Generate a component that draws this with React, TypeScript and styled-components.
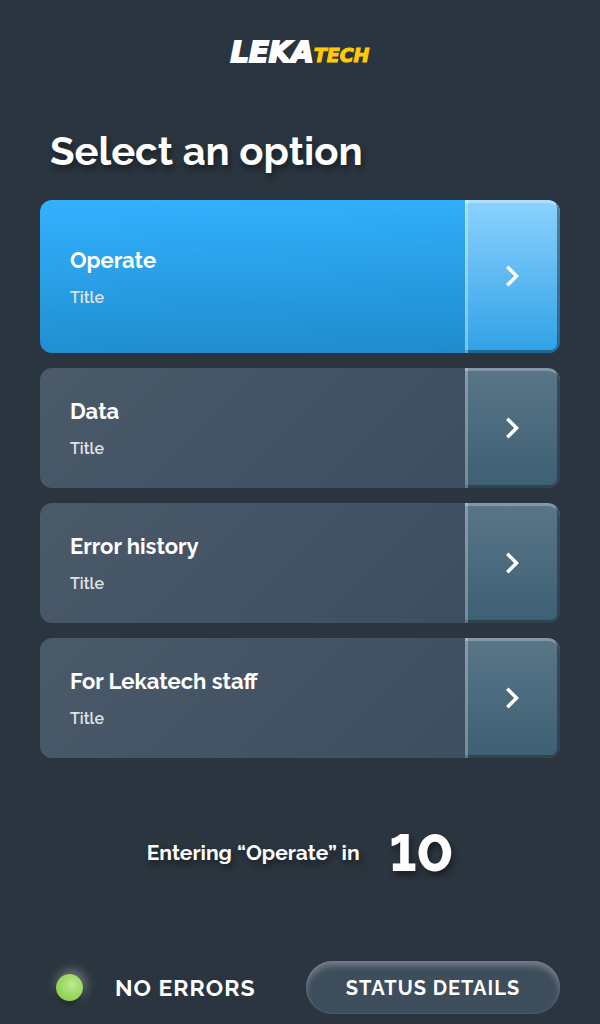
import React from 'react';
import styled, { createGlobalStyle, css } from 'styled-components';

const GlobalStyle = createGlobalStyle`
  *, *::before, *::after { box-sizing: border-box; }
  body {
    margin: 0;
    background: #2b353f;
    color: #fff;
    font-family: Raleway, Lato, sans-serif;
    font-weight: 700;
  }
  button { font: inherit; color: inherit; border: 0; cursor: pointer; }
`;

const Page = styled.main`
  display: flex;
  flex-direction: column;
  min-height: 100vh;
  padding: 36px 40px 10px;
`;

const Logo = styled.div`
  display: flex;
  justify-content: center;
  align-items: baseline;
  height: 34px;
  font-family: 'DejaVu Sans', sans-serif;
  font-style: italic;
  font-weight: 700;
  font-size: 29px;
  line-height: 32px;
  -webkit-text-stroke: 2px currentColor;
`;

const LogoAccent = styled.span`
  color: #ffcb05;
  font-size: 19px;
  line-height: 20px;
  -webkit-text-stroke: 1px currentColor;
`;

const Heading = styled.h1`
  margin: 57px 10px 25px;
  font-size: 40px;
  line-height: 48px;
  text-shadow: 2px 4px 6px rgba(0, 0, 0, 0.45);
`;

const Options = styled.nav`
  display: flex;
  flex-direction: column;
  gap: 15px;
`;

const Option = styled.button<{ $primary?: boolean }>`
  display: flex;
  width: 100%;
  padding: 0;
  overflow: hidden;
  border-radius: 12px;
  text-align: left;
  min-height: ${(p) => (p.$primary ? 153 : 120)}px;
  background: ${(p) =>
    p.$primary
      ? 'linear-gradient(178deg, #33b1ff, #1e8bcb)'
      : 'linear-gradient(135deg, #4b5a69, #3d4d60 90%)'};
`;

const OptionText = styled.span`
  display: flex;
  flex: 1;
  flex-direction: column;
  align-self: center;
  gap: 14px;
  padding: 0 30px;
`;

const OptionTitle = styled.span`
  font-size: 22px;
  line-height: 28px;
`;

const OptionSubtitle = styled.span`
  font-size: 16px;
  font-weight: 600;
  line-height: 20px;
  color: #e0e2e6;
`;

const primaryArrow = css`
  background: linear-gradient(#8cd2ff, #30a1e7);
  box-shadow:
    inset 3px 0 rgba(255, 255, 255, 0.35),
    inset -3px -3px rgba(18, 45, 66, 0.5),
    inset 0 3px rgba(255, 255, 255, 0.3);
`;

const plainArrow = css`
  background: linear-gradient(#5a7688, #3d5f74);
  box-shadow:
    inset 3px 0 rgba(255, 255, 255, 0.28),
    inset -3px -3px rgba(38, 50, 61, 0.65),
    inset 0 3px rgba(255, 255, 255, 0.25);
`;

const Arrow = styled.span<{ $primary?: boolean }>`
  display: flex;
  align-self: stretch;
  align-items: center;
  justify-content: center;
  width: 95px;
  padding: 0 1px 1px 0;
  border-radius: 0 12px 6px 0;
  ${(p) => (p.$primary ? primaryArrow : plainArrow)}
`;

const Countdown = styled.p`
  display: flex;
  align-items: center;
  justify-content: center;
  gap: 30px;
  margin: 65px 0;
  font-size: 21px;
  line-height: 60px;
  text-shadow: 2px 4px 6px rgba(0, 0, 0, 0.45);
`;

const Seconds = styled.strong`
  font-size: 52px;
  font-weight: 800;
  font-variant-numeric: lining-nums;
`;

const Footer = styled.footer`
  display: flex;
  align-items: center;
  justify-content: space-between;
  margin-top: auto;
`;

const Status = styled.div`
  display: flex;
  align-items: center;
  gap: 32px;
  padding-left: 16px;
  font-size: 23px;
  line-height: 28px;
  letter-spacing: 1px;
`;

const Lamp = styled.span`
  width: 27px;
  height: 27px;
  border-radius: 50%;
  background: radial-gradient(circle at 60% 40%, #c0e899, #9bd860 50%, #7fc838);
  box-shadow:
    0 4px 5px rgba(0, 0, 0, 0.4),
    2px -3px 12px rgba(255, 255, 255, 0.4);
`;

const DetailsButton = styled.button`
  width: 254px;
  padding: 13px 0 12px;
  border-radius: 27px;
  background: #3e4d5c;
  font-size: 20px;
  line-height: 28px;
  letter-spacing: 1px;
  box-shadow:
    inset 0 5px 6px rgba(255, 255, 255, 0.26),
    inset 0 0 2px rgba(255, 255, 255, 0.2);
`;

const Chevron = () => (
  <svg width="42" height="42" viewBox="0 0 24 24" fill="#fff" aria-hidden="true">
    <path d="M10 6 8.59 7.41 13.17 12l-4.58 4.59L10 18l6-6z" />
  </svg>
);

const options = [
  { title: 'Operate', primary: true },
  { title: 'Data' },
  { title: 'Error history' },
  { title: 'For Lekatech staff' },
];

export default function App() {
  return (
    <>
      <GlobalStyle />
      <Page>
        <Logo>
          LEKA<LogoAccent>TECH</LogoAccent>
        </Logo>
        <Heading>Select an option</Heading>
        <Options>
          {options.map(({ title, primary }) => (
            <Option key={title} type="button" $primary={primary}>
              <OptionText>
                <OptionTitle>{title}</OptionTitle>
                <OptionSubtitle>Title</OptionSubtitle>
              </OptionText>
              <Arrow $primary={primary}>
                <Chevron />
              </Arrow>
            </Option>
          ))}
        </Options>
        <Countdown>
          Entering “Operate” in <Seconds>10</Seconds>
        </Countdown>
        <Footer>
          <Status role="status">
            <Lamp />
            NO ERRORS
          </Status>
          <DetailsButton type="button">STATUS DETAILS</DetailsButton>
        </Footer>
      </Page>
    </>
  );
}
